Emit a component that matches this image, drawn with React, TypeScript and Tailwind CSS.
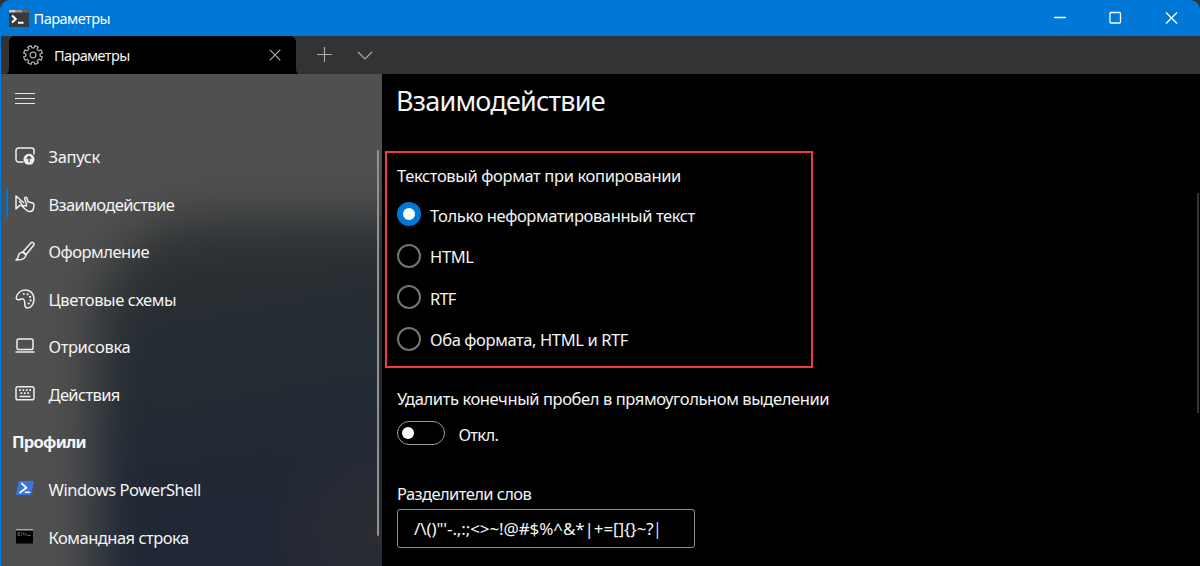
import type { ReactNode } from "react";

const stroke = {
  fill: "none",
  stroke: "currentColor",
  strokeWidth: 1.5,
  strokeLinecap: "round" as const,
  strokeLinejoin: "round" as const,
};

function TerminalLogo() {
  return (
    <svg width="20" height="17" viewBox="0 0 20 17">
      <rect width="20" height="17" rx="1" fill="#3a3a3a" />
      <path d="M0 1a1 1 0 0 1 1-1h5v2.500H0z" fill="#cfcfcf" />
      <rect x="6" width="7" height="2.500" fill="#989898" />
      <path d="M13 0h6a1 1 0 0 1 1 1v1.500h-7z" fill="#666" />
      <path d="M3 5.500l3.800 3.500L3 12.500" fill="none" stroke="#fff" strokeWidth="2" />
      <path d="M9 12.800h5.500" stroke="#fff" strokeWidth="2" />
    </svg>
  );
}

function Gear() {
  const teeth = 8;
  const pts: string[] = [];
  for (let i = 0; i < teeth; i++) {
    const a = ((i + 0.5) * 2 * Math.PI) / teeth - Math.PI / 2;
    const steps: [number, number][] = [[7.2, -0.22], [9.5, -0.19], [9.5, 0.19], [7.2, 0.22]];
    for (const [r, d] of steps) {
      pts.push(`${(10 + r * Math.cos(a + d)).toFixed(2)},${(10 + r * Math.sin(a + d)).toFixed(2)}`);
    }
  }
  return (
    <svg width="20" height="20" viewBox="0 0 20 20" fill="none" stroke="#a8a8a8" strokeWidth="1.3" strokeLinejoin="round">
      <polygon points={pts.join(" ")} />
      <circle cx="10" cy="10" r="2.900" />
    </svg>
  );
}

const icons: Record<string, ReactNode> = {
  launch: (
    <svg width="20" height="20" viewBox="0 0 20 20">
      <path {...stroke} d="M8 16H3.500A2.500 2.500 0 0 1 1 13.500V4.500A2.500 2.500 0 0 1 3.500 2h13A2.500 2.500 0 0 1 19 4.500V8" />
      <circle cx="14" cy="13.300" r="5.500" fill="currentColor" />
      <path d="M14 16.200v-5.400M11.700 12.800l2.300-2.300 2.300 2.300" fill="none" stroke="#4a4a4a" strokeWidth="1.300" />
    </svg>
  ),
  interaction: (
    <svg width="20" height="20" viewBox="0 0 20 20">
      <path {...stroke} d="M8.500 8.500L1 2v13l3.600-3.600H7" />
      <path {...stroke} d="M4.600 7.200l4.200 6.500M11.600 10.800L9.700 4.800c-.4-1.500 1.700-2.100 2.200-.6l1.300 3.900 3.800.6c1.300.3 2.100 1.300 2 2.600l-.5 3.200c-.3 1.600-1.500 2.800-3.300 3-1.700.2-2.800-.3-3.900-1.500l-3.800-3.300c.9-1.400 2.500-1.500 3.900-.6z" />
    </svg>
  ),
  brush: (
    <svg width="20" height="20" viewBox="0 0 20 20">
      <path {...stroke} d="M7.600 11.200l8.200-9.100c1.600-1.700 4.100.1 2.800 2.100L11 13.800z" />
      <path {...stroke} d="M7.600 11.200c1.600.2 2.900 1.200 3.400 2.600-.3 3.400-3.300 5.400-10 5.200 1.700-1 1.900-2.100 2.300-3.800.5-2.300 2-4 4.300-4z" />
    </svg>
  ),
  palette: (
    <svg width="20" height="20" viewBox="0 0 20 20">
      <path {...stroke} d="M1.300 8.300C2.500 3.700 6.500.9 10.800 1c4.700.2 8.200 3.800 8.200 8.900 0 5.200-3 9.100-6.200 9.100-2.200 0-3-1.600-3-3.800 0-2.800-.2-4.700-1.700-5.300-1.600-.6-2.900.8-4.700.8-1.600 0-2.500-1-2.100-2.400z" />
      <g fill="currentColor">
        <circle cx="8.800" cy="5" r="1.100" /><circle cx="12.500" cy="5.300" r="1.100" /><circle cx="15.100" cy="7.900" r="1.100" />
        <circle cx="15.600" cy="11.400" r="1.100" /><circle cx="13.700" cy="14.500" r="1.100" />
      </g>
    </svg>
  ),
  laptop: (
    <svg width="20" height="20" viewBox="0 0 20 20">
      <rect {...stroke} x="2" y="3" width="16" height="10.500" rx="1.800" />
      <path {...stroke} d="M1 16h18" />
    </svg>
  ),
  keyboard: (
    <svg width="20" height="20" viewBox="0 0 20 20">
      <rect {...stroke} x="1" y="2.700" width="18" height="13" rx="1.800" />
      <path d="M4 6.200h12.500M5.500 9.200h10" stroke="currentColor" strokeWidth="1.700" strokeDasharray="1.800 1.600" />
      <path d="M4.500 12.500h11" stroke="currentColor" strokeWidth="1.500" />
    </svg>
  ),
  powershell: (
    <svg width="20" height="20" viewBox="0 0 20 20">
      <path d="M4.500 2h13.600q1 0 .8 1l-2.600 12.200q-.2.900-1.100.900H1.800q-1 0-.8-1L3.500 2.900q.2-.900 1-.900z" fill="#3b74dc" />
      <path d="M6.800 4.500l4.700 4.300-6.400 4.700" fill="none" stroke="#fff" strokeWidth="1.800" strokeLinecap="round" strokeLinejoin="round" />
      <path d="M10.500 13.300h4" stroke="#fff" strokeWidth="1.600" strokeLinecap="round" />
    </svg>
  ),
  cmd: (
    <svg width="20" height="20" viewBox="0 0 20 20">
      <rect x="1" y="2" width="17" height="14.500" fill="#000" />
      <rect x="1" y="2" width="17" height="1.500" fill="#aaa" />
      <path d="M5 5.700H3v2.600h2M6.500 5.500v1M6.500 7.500v1M8 5.500l1.400 3M10.300 5.500l1.400 3M12.500 8.500h3" fill="none" stroke="#8b8b8b" strokeWidth=".8" />
    </svg>
  ),
};

type Item = { icon: string; label: string; track: string; active?: boolean };

const main: Item[] = [
  { icon: "launch", label: "Запуск", track: "tracking-[-0.35px]" },
  { icon: "interaction", label: "Взаимодействие", track: "tracking-[-0.62px]", active: true },
  { icon: "brush", label: "Оформление", track: "tracking-[-0.5px]" },
  { icon: "palette", label: "Цветовые схемы", track: "tracking-[-0.42px]" },
  { icon: "laptop", label: "Отрисовка", track: "tracking-[-0.38px]" },
  { icon: "keyboard", label: "Действия", track: "tracking-[-0.63px]" },
];

const profiles: Item[] = [
  { icon: "powershell", label: "Windows PowerShell", track: "tracking-[-0.46px]" },
  { icon: "cmd", label: "Командная строка", track: "tracking-[-0.5px]" },
];

function NavRow({ item }: { item: Item }) {
  return (
    <div className="flex h-[47.6px] items-center pl-[5px]">
      <span className={`mb-[2px] h-7 w-[2px] ${item.active ? "bg-[#0078d7]" : ""}`} />
      <span className="mb-px ml-[7px] h-5 w-5 text-[#eeeeee]">{icons[item.icon]}</span>
      <span className={`ml-[13.500px] whitespace-nowrap pt-px ${item.track}`}>{item.label}</span>
    </div>
  );
}

const formats = [
  { label: "Только неформатированный текст", track: "tracking-[-0.4px]" },
  { label: "HTML", track: "tracking-[-0.35px]" },
  { label: "RTF", track: "tracking-[-0.8px]" },
  { label: "Оба формата, HTML и RTF", track: "tracking-[-0.39px]" },
];

export default function App() {
  return (
    <div className="h-[566px] w-[1200px] overflow-hidden bg-[#333333] font-['Noto_Sans',sans-serif] text-[16.5px] leading-6 text-[#f4f4f4]">
      <div className="flex h-full flex-col overflow-hidden rounded-t-[9px] border-l border-[#0078d7] bg-black">
        <header className="flex h-9 shrink-0 items-center bg-[#0078d7] pl-2">
          <TerminalLogo />
          <span className="ml-[4.500px] text-[14.5px] tracking-[-0.5px] text-white">Параметры</span>
          <svg className="ml-auto mr-[20px]" width="126" height="14" viewBox="0 0 126 14" fill="none" stroke="#fff" strokeWidth="1.300">
            <path d="M0 6.500h12M112 1.500l11 11M123 1.500L112 12.500" />
            <rect x="56" y="1.500" width="10.500" height="10.500" rx="1" />
          </svg>
        </header>

        <div className="flex h-[38px] shrink-0 items-center bg-[#333333] pl-[5px]">
          <svg className="self-end" width="3" height="5" viewBox="0 0 3 5"><path d="M3 0v5H0q3-1 3-5z" fill="#000" /></svg>
          <div className="flex h-full w-[287px] items-center rounded-t-[6px] bg-black pl-[14px] pr-[15px]">
            <Gear />
            <span className="ml-[11px] text-[14.5px] tracking-[-0.62px]">Параметры</span>
            <svg className="ml-auto" width="12" height="12" viewBox="0 0 12 12" stroke="#aaa" strokeWidth="1.200"><path d="M.7.7l10.600 10.600M11.300.7L.7 11.300" /></svg>
          </div>
          <svg className="self-end" width="3" height="5" viewBox="0 0 3 5"><path d="M0 0v5h3q-3-1-3-5z" fill="#000" /></svg>
          <svg className="ml-[18px]" width="60" height="16" viewBox="0 0 60 16" fill="none" stroke="#aaa" strokeWidth="1.200">
            <path d="M0 7.500h15M7.500 0v15M41 5l7 7 7-7" />
          </svg>
        </div>

        <div className="flex min-h-0 flex-1">
          <aside className="relative isolate flex w-[381px] shrink-0 flex-col overflow-hidden bg-[#505050]">
            <div className="absolute -right-24 -bottom-24 left-[94px] top-[144px] -z-10 rounded-tl-[110px] bg-[radial-gradient(circle_at_75%_72%,#2f2f33_0%,transparent_26%),linear-gradient(170deg,#303333_0%,#242c33_32%,#202734_60%,#202534_100%)] blur-[25px]" />
            <div className="flex h-12 items-center pl-[14px]">
              <svg width="20" height="12" viewBox="0 0 20 12" stroke="#e8e8e8" strokeWidth="1.100"><path d="M0 1.500h20M0 6.500h20M0 11.500h20" /></svg>
            </div>
            <div className="flex min-h-0 flex-1 pt-[10.800px]">
              <nav className="min-w-0 flex-1">
                {main.map((item) => <NavRow key={item.label} item={item} />)}
                <div className="flex h-[47.6px] items-center pl-[11px] font-bold tracking-[-0.75px]">Профили</div>
                {profiles.map((item) => <NavRow key={item.label} item={item} />)}
              </nav>
              <div className="mr-[3px] mt-[17px] h-[386px] w-[2px] rounded-full bg-[#929292]" />
            </div>
          </aside>

          <main className="flex min-w-0 flex-1 flex-col items-start pl-[3px]">
            <h1 className="mt-[9px] h-9 pl-[11px] text-[27px] leading-9 tracking-[-0.78px]">Взаимодействие</h1>
            <section className="mt-[32px] h-[217px] w-[428px] border-2 border-[#f03c3c] pl-[10px] pt-[11px]">
              <h2 className="h-6 tracking-[-0.36px]">Текстовый формат при копировании</h2>
              <div className="mt-[5.500px]">
                {formats.map((f, i) => (
                  <label key={f.label} className="flex h-[41.500px] items-center">
                    <span className={`flex h-6 w-6 items-center justify-center rounded-full ${i === 0 ? "bg-[#0078d7]" : "border-2 border-[#747474]"}`}>
                      {i === 0 && <span className="h-3 w-3 rounded-full bg-white" />}
                    </span>
                    <span className={`ml-[9px] pt-[3px] ${f.track}`}>{f.label}</span>
                  </label>
                ))}
              </div>
            </section>
            <h2 className="mt-[19px] h-6 pl-[12px] tracking-[-0.4px]">Удалить конечный пробел в прямоугольном выделении</h2>
            <div className="ml-[12px] mt-[10px] flex h-6 items-center">
              <span className="flex h-6 w-12 items-center rounded-full border-[1.500px] border-[#999999] pl-[4px]">
                <span className="h-3 w-3 rounded-full bg-white" />
              </span>
              <span className="ml-[13.500px] pt-[3px] tracking-[-0.7px]">Откл.</span>
            </div>
            <h2 className="mt-[37px] h-6 pl-[12px] tracking-[-0.58px]">Разделители слов</h2>
            <div className="ml-[12px] mt-[3px] flex h-[39px] w-[298px] items-center rounded-[3px] border border-[#8d8d8d] pl-[16px]">
              <span className="whitespace-pre pt-[2px] text-[17px] tracking-[-0.1px]">{`/\\()"'-.,:;<>~!@#$%^&*|+=[]{}~?`}<span className="text-[14px]">│</span></span>
            </div>
          </main>
          <div className="mr-px mt-[119px] h-[220px] w-[2px] bg-[#343434]" />
        </div>
      </div>
    </div>
  );
}
